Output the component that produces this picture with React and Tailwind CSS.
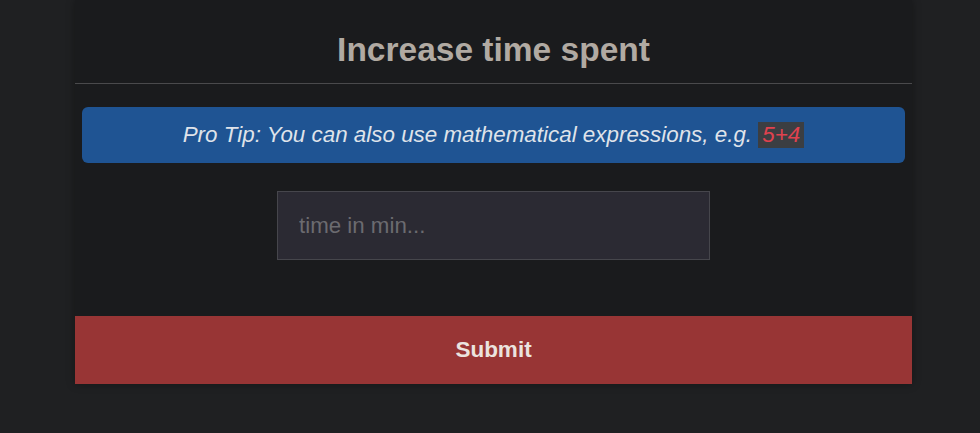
import React, { useState } from "react";

export default function App() {
  const [value, setValue] = useState("");

  return (
    <div className="min-h-[433px] w-full bg-[#1f2022] font-['Liberation_Sans',Arial,sans-serif]">
      <div className="ml-[75px] w-[837px] bg-[#1a1b1d] shadow-[0_0_8px_rgba(0,0,0,0.35)]">
        {/* Header */}
        <div className="flex h-[84px] justify-center border-b border-[#4a4a4c] pt-[33px]">
          <h1 className="text-[33.5px] font-bold leading-none text-[#b1aaa2]">Increase time spent</h1>
        </div>

        {/* Body */}
        <div className="px-[7px] pt-[23px]">
          <div className="flex h-[56px] items-center justify-center rounded-[6px] bg-[#1f5493] text-[22.4px] italic text-[#dfe3ea]">
            <span>Pro Tip: You can also use mathematical expressions, e.g.&nbsp;</span>
            <code className="bg-[#3b3e42] px-[4px] font-['Liberation_Sans',Arial,sans-serif] text-[22.4px] italic leading-[26px] text-[#e0424f]">5+4</code>
          </div>

          <div className="flex justify-center pt-[28px] pb-[56px]">
            <input
              type="text"
              value={value}
              onChange={(e) => setValue(e.target.value)}
              placeholder="time in min..."
              className="h-[69px] w-[433px] border border-[#46464c] bg-[#2b2a33] px-[21px] text-[22.3px] text-[#cfcfcf] outline-none placeholder:text-[#6b6b70]"
            />
          </div>
        </div>

        <button className="flex h-[68px] w-full items-center justify-center bg-[#983535] text-[22.5px] font-bold text-[#ebe3df]">
          Submit
        </button>
      </div>
    </div>
  );
}
